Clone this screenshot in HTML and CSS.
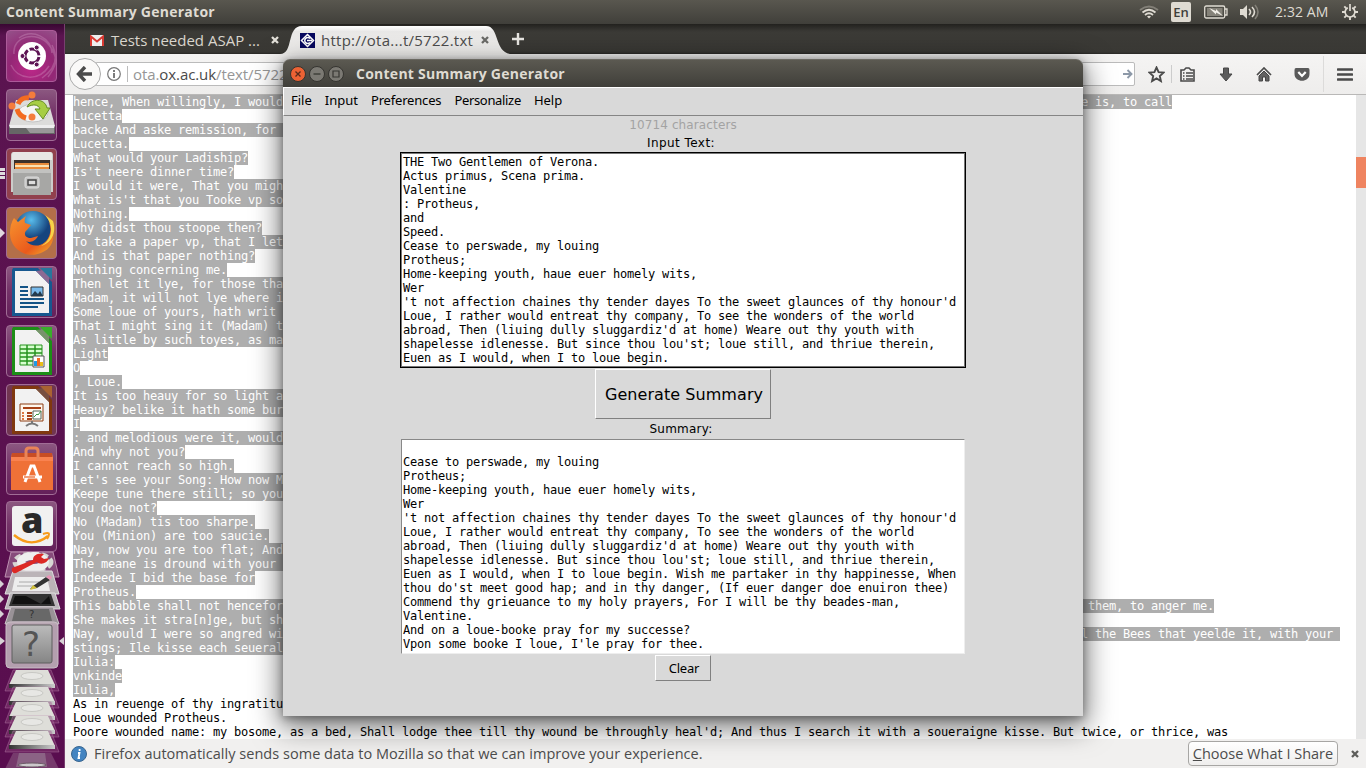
FILE: index.html
```html
<!DOCTYPE html>
<html lang="en">
<head>
<meta charset="utf-8">
<title>Content Summary Generator</title>
<link rel="stylesheet" href="styles.css">
</head>
<body>
<div class="desktop">
  <header class="panel">
    <span class="panel-title">Content Summary Generator</span>
    <div class="indicators">
      <svg class="wifi" width="20" height="14" viewBox="0 0 20 14" fill="none" stroke="#dfdbd2" stroke-width="1.8"><path d="M1 5Q10-2 19 5" stroke="#827f77"/><path d="M3.500 7.500Q10 2 16.500 7.500M6 10Q10 6.500 14 10"/><path d="M8 11.500Q10 10 12 11.500L10 13.500Z" fill="#dfdbd2" stroke="none"/></svg>
      <span class="lang">En</span>
      <svg class="battery" width="24" height="14" viewBox="0 0 24 14"><rect x=".7" y="1" width="20" height="12" rx="1.500" fill="none" stroke="#dfdbd2" stroke-width="1.300"/><path d="M21 4h2v6h-2" fill="none" stroke="#dfdbd2" stroke-width="1.300"/><path d="M3 3h15.500v8H3z" fill="#858279"/><path d="M5 3l7 3 0-2 7 7-7-3.500v2z" fill="#f1eee7"/></svg>
      <svg class="sound" width="20" height="16" viewBox="0 0 20 16"><path d="M0 5h3l4-4v14l-4-4H0z" fill="#dfdbd2"/><g fill="none" stroke="#dfdbd2" stroke-width="1.600"><path d="M9 5q3 3 0 6M12 3q5 5 0 10"/><path d="M15 1q6 7 0 14" stroke="#827f77"/></g></svg>
      <span class="clock">2:32 AM</span>
      <svg class="gear" width="16" height="16" viewBox="0 0 16 16" fill="none" stroke="#dfdbd2"><path d="M5.800 3.700a4.900 4.900 0 1 0 4.400 0M8 0v7" stroke-width="1.700"/><path d="M0 8h3M13 8h3M8 13v3M2.300 2.300l2 2M13.700 2.300l-2 2M2.300 13.700l2-2M13.700 13.700l-2-2" stroke-width="1.900"/></svg>
    </div>
  </header>

  <div class="workspace">
    <nav class="launcher">
      <div class="tile dash"><svg viewBox="0 0 52 52"><g fill="none" stroke="#e2b6d8" stroke-width="1.500" opacity=".28"><path d="M8 24C6 6 31 0 43 15s5 24-1 32M5 35C12 50 33 52 43 36M46 15c8 15 0 26-10 33M13 8C27-2 45 8 46 23"/></g><circle cx="26" cy="26" r="14" fill="#fff"/><circle cx="26" cy="26" r="7" fill="none" stroke="#5d1454" stroke-width="3" stroke-dasharray="12.660 2" stroke-dashoffset="-1"/><g fill="#5d1454" stroke="#fff"><circle cx="16.500" cy="26" r="2.500"/><circle cx="30.700" cy="17.500" r="2.500"/><circle cx="30.700" cy="34.500" r="2.500"/></g></svg></div>
      <div class="tile disk"><svg viewBox="0 0 52 52"><path d="M10 11h32l7 26H3z" fill="#dcdcda"/><path d="M3 36h46v9H3z" fill="#666"/><path d="M20 39h28v5H24z" fill="#999"/><path d="M3 36h46l-1 3H4z" fill="#eee"/><ellipse cx="27" cy="24" rx="15" ry="9" fill="#f4f4f3" stroke="#c5c5c5"/><path d="M23 9a10 10 0 0 0-11 6M11 20q2 7 9 9" fill="none" stroke="#f36b20" stroke-width="5"/><g fill="#f47c3c"><circle cx="26" cy="6" r="3.500"/><circle cx="6" cy="17" r="3.500"/><circle cx="26" cy="28" r="3.500"/></g><path d="M21 18c4-9 18-9 20 1h3l-7 11-8-10h5c-2-5-7-5-13-2z" fill="#a7ce45" stroke="#648b23"/></svg></div>
      <div class="tile files"><i class="pips"></i><svg viewBox="0 0 52 52"><path d="M8 4h36q3 0 3 3v37H5V7q0-3 3-3z" fill="#ccccca"/><path d="M8 4h36q2 0 2 2v6H6V6q0-2 2-2z" fill="#e8e7e4"/><path d="M8 12h36v12H8z" fill="#3b302a"/><path d="M9 15h34v8H9z" fill="#e98b3a"/><path d="M9 18h34" stroke="#fae1b2" stroke-width="2"/><path d="M7 21h38v26H7z" fill="#a7a7a5"/><path d="M7 21h38v4H7z" fill="#c2c2c0"/><rect x="19" y="29" width="14" height="11" rx="2" fill="#c5c5c4" stroke="#ddd"/><rect x="22" y="32" width="8" height="5" fill="#ddd" stroke="#444" stroke-width="1.500"/></svg></div>
      <div class="tile firefox"><i class="arrow"></i><svg viewBox="0 0 52 52"><defs><radialGradient id="globe" cx="45%" cy="25%"><stop stop-color="#59bdec"/><stop offset="1" stop-color="#16447e"/></radialGradient><linearGradient id="fox" x2="1" y2="1"><stop stop-color="#f7952f"/><stop offset=".65" stop-color="#ea5a1c"/><stop offset="1" stop-color="#f3b22d"/></linearGradient></defs><circle cx="27" cy="22" r="18" fill="url(#globe)"/><path d="M8 11l4 4 8-6q-2 4-1 7l6 2-4 5c-4 3-2 8 4 8l7-2c-3 6-9 7-12 5 8 9 22 4 24-8 1-5 0-9-2-12 10 12 5 27-5 31C22 53 4 43 4 26q0-9 4-15z" fill="url(#fox)"/><path d="M39 8c10 12 7 25-4 31 13-4 15-16 12-25" fill="#f8d348"/></svg></div>
      <div class="tile"><svg viewBox="0 0 52 52"><path d="M7 2h25l14 14v34H6V4z" fill="#17588f"/><path d="M9 5h21l13 13v29H9z" fill="#f2f2f2"/><path d="M30 5l13 13V8q0-4-5-4z" fill="#8c6a93"/><path d="M34 2h12v12z" fill="#28779c"/><path d="M14 21h8M14 25h8M14 29h8M14 33h24M14 37h24M14 41h18" stroke="#145486" stroke-width="2"/><path d="M25 21h12v9H25z" fill="#78baeb" stroke="#333"/><path d="M25 30l4-5 3 3 2-3 3 5z" fill="#243b4d"/></svg></div>
      <div class="tile"><svg viewBox="0 0 52 52"><path d="M7 2h25l14 14v34H6V4z" fill="#1d8e17"/><path d="M9 5h21l13 13v29H9z" fill="#f2f2f2"/><path d="M30 5l13 13V8q0-4-5-4z" fill="#78926c"/><path d="M34 2h12v12z" fill="#39ad2a"/><path d="M14 20h22v20H14z" fill="#d8ffd0" stroke="#26941e"/><path d="M14 24h22M14 28h22M14 32h22M14 36h22M21 20v20M29 20v20" stroke="#26941e" stroke-width="1.500"/><path d="M27 31h11v11H27z" fill="white" stroke="#555"/><path d="M28 36h3v5h-3z" fill="#209be8"/><path d="M31 33h3v8h-3z" fill="#f46b23"/><path d="M34 37h3v4h-3z" fill="#e8bd18"/></svg></div>
      <div class="tile impress"><svg viewBox="0 0 52 52"><path d="M7 2h25l14 14v34H6V4z" fill="#80380f"/><path d="M9 5h21l13 13v29H9z" fill="#f2f2f2"/><path d="M30 5l13 13V8q0-4-5-4z" fill="#785040"/><path d="M34 2h12v12z" fill="#aa6332"/><path d="M14 20h23v17H14z" fill="#fff7ed" stroke="#8c3d12"/><path d="M17 24h18M21 29h5M21 32h5M21 35h5" stroke="#a84217" stroke-width="2"/><path d="M17 28v8" stroke="#de773f" stroke-width="2" stroke-dasharray="2 1"/><path d="M27 27h8v8h-8z" fill="white" stroke="#536458"/><path d="M28 33l3-3 1 1 3-4" fill="none" stroke="#3a9645"/><path d="M26 37v3m-6 2q6-5 12 0" stroke="#777" stroke-width="2" fill="none"/></svg></div>
      <div class="tile"><svg viewBox="0 0 52 52"><path d="M6 10h40l1 5v32H5V15z" fill="#ef7137"/><path d="M6 10h40v6H5z" fill="#c84d24"/><path d="M5 14h42v4H5z" fill="#f98250"/><path d="M20 17V8q0-3 3-3h6q3 0 3 3v9" fill="none" stroke="#e98458" stroke-width="3"/><path d="M19 39l6-16h3l6 16M17 34h19" fill="none" stroke="white" stroke-width="3"/><path d="M18 34h11" stroke="#ea6a2f" stroke-width="1.300"/></svg></div>
      <div class="tile amazon"><svg viewBox="0 0 52 52"><rect x="6" y="5" width="41" height="40" rx="3" fill="#f1f1f1"/><text x="15" y="32" class="amazon-a">a</text><path d="M8 34c12 10 24 9 34 1" fill="none" stroke="#f79b19" stroke-width="2.500"/><path d="M37 33q6-2 6 0t-2 5" fill="none" stroke="#f79b19" stroke-width="2"/></svg></div>
      <svg class="folded" width="65" height="218" viewBox="0 0 65 218">
        <defs><linearGradient id="plate" x2="0" y2="1"><stop stop-color="#bbb"/><stop offset="1" stop-color="#858585"/></linearGradient><linearGradient id="edge"><stop stop-color="#333"/><stop offset="1" stop-color="#ccc"/></linearGradient>
        <g id="drive"><path d="M13 0h38l8 21H5z" fill="#9b5788" fill-opacity=".36" stroke="#b17aa6" stroke-opacity=".45"/><path d="M16 0h32l7 15H9z" fill="#deded9"/><ellipse cx="32" cy="6" rx="11" ry="3.500" fill="#e7e7e4" stroke="#c8c8c4"/><path d="M9 14h46v4H9z" fill="url(#edge)"/></g></defs>
        <path d="M11 1h42l6 25H5z" fill="#ad7ea1" fill-opacity=".55" stroke="#bd91b1"/>
        <ellipse cx="33" cy="11" rx="18" ry="8" fill="none" stroke="#d7d7d3" stroke-width="5" stroke-dasharray="6 3"/><ellipse cx="33" cy="11" rx="12" ry="6" fill="none" stroke="#eee" stroke-width="8"/>
        <path d="M13 20h39l7 23H5z" fill="#bbb4b8" stroke="#e0dce0"/><path d="M15 26h32l3 14H12z" fill="#ededed"/><path d="M19 31h20M17 35h22" stroke="#aaa"/><path d="M33 35l13-9 4 3-13 8-7 1z" fill="#333"/><path d="M46 26l3-2 3 2-2 3z" fill="#e994b7"/><path d="M33 34l4 3-7 2z" fill="#d4c33b"/>
        <path d="M12 17l21-8c0-6 6-7 11-6l-3 3 3 2 5-1c-2 6-9 7-12 4L16 22q-5 1-4-5z" fill="#dc2925"/>
        <path d="M10 42h45l5 16H5z" fill="#bbb6ba" stroke="#ddd"/><path d="M13 43h38l4 12H9z" fill="#333"/><path d="M15 45h34l2 8H12z" fill="#111"/><path d="M26 45h23l-8 8z" fill="#333"/>
        <path d="M11 56h42l6 17H5z" fill="#999297" stroke="#ccc5ca"/><path d="M15 58h34l3 12H12z" fill="#686868"/><text x="29" y="67" class="small-query">?</text>
        <path d="M10 71h44q4 0 4 4v38q0 4-4 4H10q-4 0-4-4V75q0-4 4-4z" fill="#b9a8b4" fill-opacity=".95" stroke="#c9bdc6"/><rect x="12" y="74" width="40" height="38" rx="2" fill="url(#plate)" stroke="#5f5f5f"/><text x="22" y="105" class="query">?</text>
        <path d="M0 29l4 4-4 4zM0 44l4 4-4 4zM0 59l4 4-4 4zM0 86l5 4-5 4zM64 86l-5 4 5 4z" fill="#d7d1d5"/>
        <use href="#drive" y="119"/><use href="#drive" y="136"/><use href="#drive" y="151"/><use href="#drive" y="165"/><use href="#drive" y="180"/>
        <path d="M13 202h38l8 16H5z" fill="#8b5880" fill-opacity=".6"/><path d="M19 202h26l2 14H16z" fill="#a797a3" fill-opacity=".45"/><ellipse cx="32" cy="214" rx="14" ry="2" fill="#ccc8cb" stroke="#6b5966"/>
      </svg>
    </nav>

    <main class="browser">
      <div class="tabs">
        <div class="tab"><svg class="favicon" width="14" height="11" viewBox="0 0 14 11"><path d="M0 0h14v11H0z" fill="#eee"/><path d="M1 11V1.500L7 6.500l6-5V11" fill="none" stroke="#d83a32" stroke-width="2"/></svg><span class="gmail">Tests needed ASAP ...</span><svg class="tab-x" width="8" height="8" viewBox="0 0 8 8"><path d="M1 1l6 6M7 1L1 7" stroke="#e4e1da" stroke-width="2.300"/></svg></div>
        <div class="tab active"><svg class="tab-shape" width="232" height="30" viewBox="0 0 232 30"><defs><linearGradient id="tabfill" x2="0" y2="1"><stop stop-color="#fff"/><stop offset=".2" stop-color="#e9e8e7"/><stop offset="1" stop-color="#f2f1ef"/></linearGradient></defs><path d="M0 30C14 30 6 2 22 2H206C220 2 214 30 232 30z" fill="url(#tabfill)"/></svg><svg class="ota" width="15" height="15" viewBox="0 0 15 15"><path d="M0 0h15v15H0z" fill="#07085f"/><path d="M7.500 1.500l6 6-6 6-6-6z" fill="none" stroke="white" stroke-width="1.500"/><path d="M10 5.500a3 3 0 1 0 0 4M7 7.500h5" fill="none" stroke="white" stroke-width="1.500"/></svg><span class="address-tab">http://ota...t/5722.txt</span><svg class="tab-x" width="8" height="8" viewBox="0 0 8 8"><path d="M1 1l6 6M7 1L1 7" stroke="#6a6a67" stroke-width="2.300"/></svg></div>
        <svg class="plus" width="14" height="14" viewBox="0 0 14 14"><path d="M7 1v12M1 7h12" stroke="#e8e6e2" stroke-width="2.400"/></svg>
      </div>
      <div class="toolbar">
        <div class="back"><svg width="18" height="16" viewBox="0 0 18 16"><path d="M9 1L2.500 8 9 15M3 8h13" fill="none" stroke="#4b4b4b" stroke-width="3.400"/></svg></div>
        <div class="urlbar"><svg class="info" width="14" height="14" viewBox="0 0 14 14"><circle cx="7" cy="7" r="6.300" fill="none" stroke="#777" stroke-width="1.200"/><path d="M7 3v2M7 6v5" stroke="#666" stroke-width="1.700"/></svg><span class="url">ota.<b>ox.ac.uk</b>/text/5722.txt</span><svg class="go" width="10" height="10" viewBox="0 0 10 10"><path d="M0 5h8M4.500 1l4 4-4 4" fill="none" stroke="#8d99a8" stroke-width="1.900"/></svg></div>
        <svg class="star" width="17" height="17" viewBox="0 0 17 17"><path d="M8.500 1.500l2.100 4.600 5 .5-3.800 3.400 1.100 5-4.400-2.600L4.100 15l1.100-5-3.800-3.400 5-.5z" fill="none" stroke="#4a4a4a" stroke-width="1.900"/></svg>
        <i class="divider small"></i>
        <svg class="library" width="15" height="15" viewBox="0 0 15 15"><path d="M1 3h3l2-2h3l2 2h3v11H1z" fill="none" stroke="#4a4a4a" stroke-width="1.600"/><path d="M3 6h1.500M3 9h1.500M3 12h1.500M6 6h7M6 9h7M6 12h7" stroke="#4a4a4a" stroke-width="1.500"/></svg>
        <svg class="download" width="14" height="15" viewBox="0 0 14 15"><path d="M4.500 1h5v6H13L7 14 1 7h3.500z" fill="#5c5c5c" stroke="#474747"/></svg>
        <svg class="home" width="16" height="15" viewBox="0 0 16 15"><path d="M1 8l7-7 7 7" fill="none" stroke="#4a4a4a" stroke-width="1.700"/><path d="M3 9l5-5 5 5v5h-3.500v-4h-3v4H3z" fill="#626262" stroke="#454545"/></svg>
        <svg class="pocket" width="16" height="15" viewBox="0 0 16 15"><path d="M2 1h12q1.500 0 1.500 2v4c0 9-15 9-15 0V3Q.500 1 2 1z" fill="#5a5a5a"/><path d="M4.300 5l3.700 4 3.700-4" fill="none" stroke="white" stroke-width="2.200"/></svg>
        <i class="divider"></i>
        <svg class="hamburger" width="16" height="13" viewBox="0 0 16 13"><path d="M1 1.500h14M1 6.500h14M1 11.500h14" stroke="#4a4a4a" stroke-width="2.600" stroke-linecap="round"/></svg>
      </div>
      <div class="viewport">
<pre class="document"><span>hence, When willingly, I would haue had her here? How angerly I taught my brow to frowne, When inward ioy enforc'd my heart to smile? My pennance is, to call</span>
<span>Lucetta</span>
<span>backe And aske remission, for my folly past. What hoe:</span>
<span>Lucetta.</span>
<span>What would your Ladiship?</span>
<span>Is't neere dinner time?</span>
<span>I would it were, That you might kill your stomacke on your meat.</span>
<span>What is't that you Tooke vp so gingerly?</span>
<span>Nothing.</span>
<span>Why didst thou stoope then?</span>
<span>To take a paper vp, that I let fall.</span>
<span>And is that paper nothing?</span>
<span>Nothing concerning me.</span>
<span>Then let it lye, for those that it concernes.</span>
<span>Madam, it will not lye where it concernes.</span>
<span>Some loue of yours, hath writ to you in Rime.</span>
<span>That I might sing it (Madam) to a tune.</span>
<span>As little by such toyes, as may be possible.</span>
<span>Light</span>
<span>O</span>
<span>, Loue.</span>
<span>It is too heauy for so light a tune.</span>
<span>Heauy? belike it hath some burden then?</span>
<span>I</span>
<span>: and melodious were it, would you sing it.</span>
<span>And why not you?</span>
<span>I cannot reach so high.</span>
<span>Let's see your Song: How now Minion?</span>
<span>Keepe tune there still; so you will sing it out.</span>
<span>You doe not?</span>
<span>No (Madam) tis too sharpe.</span>
<span>You (Minion) are too saucie.</span>
<span>Nay, now you are too flat; And marre the concord.</span>
<span>The meane is dround with your vnruly base.</span>
<span>Indeede I bid the base for</span>
<span>Protheus.</span>
<span>This babble shall not henceforth trouble me; Here is a coile with protestation: Goe, get you gone: and let the papers lye: You would be fingring them, to anger me.</span>
<span>She makes it stra[n]ge, but she would be best pleas'd To be so angred with another Letter.</span>
<span>Nay, would I were so angred with the same: Oh hatefull hands, to teare such louing words; Iniurious Waspes, to feede on such sweet hony, And kill the Bees that yeelde it, with your </span>
<span>stings; Ile kisse each seuerall paper, for amends: Looke, here is writ, kinde</span>
<span>Iulia:</span>
<span>vnkinde</span>
<span>Iulia,</span>
As in reuenge of thy ingratitude, I throw thy name against the bruzing-stones.
Loue wounded Protheus.
Poore wounded name: my bosome, as a bed, Shall lodge thee till thy wound be throughly heal'd; And thus I search it with a soueraigne kisse. But twice, or thrice, was</pre>
        <div class="scrollbar"><div class="thumb"></div></div>
      </div>
      <div class="notice"><svg width="16" height="16" viewBox="0 0 16 16"><circle cx="8" cy="8" r="7.500" fill="#4384c1" stroke="#39658e"/><path d="M8.600 3v2M7 7h1.500l-1 5H9" fill="none" stroke="white" stroke-width="1.800"/></svg><span class="message">Firefox automatically sends some data to Mozilla so that we can improve your experience.</span><button class="choice"><u>C</u>hoose What I Share</button><svg class="notice-x" width="8" height="8" viewBox="0 0 8 8"><path d="M1 1l6 6M7 1L1 7" stroke="#5d5d5a" stroke-width="2.300"/></svg></div>
    </main>
  </div>

  <section class="window">
    <div class="titlebar"><svg width="56" height="18" viewBox="0 0 56 18"><circle cx="9" cy="9" r="7.500" fill="#ec6234" stroke="#353430"/><path d="M6.500 6.500l5 5M11.500 6.500l-5 5" stroke="#552b1c" stroke-width="1.300"/><circle cx="28" cy="9" r="7.500" fill="#7b7973" stroke="#353430"/><path d="M24.500 9h7" stroke="#373632" stroke-width="1.300"/><circle cx="47" cy="9" r="7.500" fill="#7b7973" stroke="#353430"/><path d="M44 6h6v6h-6z" fill="none" stroke="#373632" stroke-width="1.200"/></svg><span class="window-title">Content Summary Generator</span></div>
    <div class="menubar"><span>File</span><span>Input</span><span class="pref">Preferences</span><span class="pers">Personalize</span><span>Help</span></div>
    <div class="app">
      <div class="count">10714 characters</div>
      <div class="label">Input Text:</div>
<pre class="input-text">THE Two Gentlemen of Verona.
Actus primus, Scena prima.
Valentine
: Protheus,
and
Speed.
Cease to perswade, my louing
Protheus;
Home-keeping youth, haue euer homely wits,
Wer
't not affection chaines thy tender dayes To the sweet glaunces of thy honour'd
Loue, I rather would entreat thy company, To see the wonders of the world
abroad, Then (liuing dully sluggardiz'd at home) Weare out thy youth with
shapelesse idlenesse. But since thou lou'st; loue still, and thriue therein,
Euen as I would, when I to loue begin.</pre>
      <button class="generate">Generate Summary</button>
      <div class="label summary-label">Summary:</div>
<pre class="summary-text">&nbsp;
Cease to perswade, my louing
Protheus;
Home-keeping youth, haue euer homely wits,
Wer
't not affection chaines thy tender dayes To the sweet glaunces of thy honour'd
Loue, I rather would entreat thy company, To see the wonders of the world
abroad, Then (liuing dully sluggardiz'd at home) Weare out thy youth with
shapelesse idlenesse. But since thou lou'st; loue still, and thriue therein,
Euen as I would, when I to loue begin. Wish me partaker in thy happinesse, When
thou do'st meet good hap; and in thy danger, (If euer danger doe enuiron thee)
Commend thy grieuance to my holy prayers, For I will be thy beades-man,
Valentine.
And on a loue-booke pray for my successe?
Vpon some booke I loue, I'le pray for thee.</pre>
      <button class="clear">Clear</button>
    </div>
  </section>
</div>
</body>
</html>
```
FILE: styles.css
```css
*{box-sizing:border-box}
body{margin:0;overflow:hidden;font-family:"Open Sans","Noto Sans",sans-serif;color:#4c4c4c}
svg{display:block;flex:none}
pre{margin:0;font:12px/14px "DejaVu Sans Mono",monospace;letter-spacing:-.224px}
button{font:inherit;padding:0}
.desktop{position:relative;width:1366px;height:768px;overflow:hidden}
.panel{height:24px;display:flex;align-items:center;justify-content:space-between;padding:0 8px 0 6px;background:linear-gradient(#59574f,#403f3a);color:#dfdbd2;white-space:nowrap}
.panel-title,.window-title{font-weight:700;font-size:14px;line-height:24px;letter-spacing:.25px}
.indicators{display:flex;align-items:center;font-size:15px}
.lang{width:20px;height:20px;margin:0 13px 0 12px;border-radius:2px;background:#dfdbd2;color:#403f3a;font-size:13px;font-weight:600;line-height:20px;text-align:center}
.sound{margin-left:12px}.clock{width:55px;margin:-1px 12px 0 15px;font-size:14px;letter-spacing:.1px}
.workspace{height:744px;display:flex}
.launcher{width:65px;display:flex;flex-direction:column;padding:6px 7px 0 6px;gap:7px;background:linear-gradient(#390732,#5b1450 12px,#5a114f 60%,#590d4f);border-right:1px solid #783f6f;flex:none;position:relative}
.tile{height:52px;flex:none;border:1px solid #a16d96;border-radius:4px;background:linear-gradient(#8b5780,#753469 45%,#64205a);position:relative}
.tile svg{margin:-1px;width:52px;height:52px}
.tile.dash{background:radial-gradient(circle at 50% 75%,#bd2889,#932775 50%,#95528a);border-color:#ac5a99}
.files{background:#91404d}.firefox{background:#b36f49}.impress{background:#713651}
.amazon{height:51px;margin-top:-1px}
.amazon-a{font:800 36px "Open Sans",sans-serif;fill:#292929}
.query{font:34px "DejaVu Sans",sans-serif;fill:#555}.small-query{font:10px "DejaVu Sans",sans-serif;fill:#333}
.folded{margin:-8px 0 0 -6px}
.arrow{position:absolute;left:-7px;top:20px;border:5px solid transparent;border-left-color:#e1d8df;border-right:0}
.pips{position:absolute;left:-7px;top:19px;width:5px;height:11px;background:repeating-linear-gradient(#ddd 0 3px,transparent 3px 4px)}
.browser{width:1301px;display:flex;flex-direction:column}
.tabs{height:30px;background:linear-gradient(#22211e,#3c3b37 8px,#393834 28px,#292825);display:flex;align-items:center;color:#d9d5cd}
.tab{display:flex;align-items:center;width:215px;height:30px;padding:2px 0 0 25px;font-size:15px;white-space:nowrap}
.gmail{margin-left:7px;width:157px}.gmail,.address-tab{padding-bottom:1px}.tab-x{margin-left:3px}
.tab.active{position:relative;width:226px;padding-left:20px;color:#4c4c4c}
.tab-shape{position:absolute;left:0;top:0}.ota,.address-tab,.active .tab-x{position:relative}.address-tab{width:153px;margin-left:6px;letter-spacing:.26px}.active .tab-x{margin-left:7px}
.plus{margin-left:5px}
.toolbar{height:41px;display:flex;align-items:center;padding-left:4px;background:linear-gradient(#f5f4f3,#eeedec);border-bottom:1px solid #b9b8b7}
.back{width:32px;height:32px;border:1px solid #aaa;border-radius:50%;background:#faf9f8;display:grid;place-items:center;z-index:1}
.urlbar{width:1040px;height:24px;display:flex;align-items:center;margin-left:-6px;padding:0 1px 0 11px;border:1px solid #bbb;border-radius:2px;background:#fff;white-space:nowrap}
.url{height:16px;display:flex;align-items:center;margin-left:6px;padding-left:5px;border-left:1px solid #bbb;font-size:15px;letter-spacing:-.08px;color:#969696}.url b{font-weight:400;color:#4a4a4a}
.go{margin-left:auto}.star{margin-left:13px}.divider{width:1px;height:36px;background:#dcdbda}.divider.small{height:18px;margin-left:6px;background:#ccc}.library{margin-left:8px}.download{margin-left:24px}.home{margin-left:23px}.pocket{margin-left:22px}.pocket + .divider{margin-left:13px}.hamburger{margin-left:13px}
.viewport{height:644px;background:#fff;display:flex;justify-content:space-between;overflow:hidden}
.document{padding-left:8px;color:#000}.document span{display:inline-block;height:14px;vertical-align:top;background:#aeaeae;color:#fff}
.scrollbar{width:10px;padding-top:62px;background:#e6e6e6;flex:none}.thumb{height:31px;background:#ef8460}
.notice{height:29px;display:flex;align-items:center;padding:0 7px 0 6px;background:#f1f0ef;font-size:14.5px;white-space:nowrap}
.message{margin-left:7px;letter-spacing:.03px}.choice{width:150px;height:25px;margin-left:auto;border:1px solid #a7a6a4;border-radius:4px;background:linear-gradient(#fff,#efeeed);color:#4c4c4c}.notice-x{margin-left:13px}
.window{position:absolute;left:283px;top:59px;width:800px;height:657px;border-radius:7px 7px 0 0;background:#d9d9d9;box-shadow:0 8px 28px 3px rgba(0,0,0,.55),0 2px 8px rgba(0,0,0,.35);font-family:"DejaVu Sans",sans-serif;color:#000}
.titlebar{height:28px;border-radius:7px 7px 0 0;background:linear-gradient(#5b5951,#403f3a);border-top:1px solid #6b6962;display:flex;align-items:center;padding-left:6px;color:#dfdbd2}
.window-title{font-family:"Open Sans",sans-serif;margin-left:11px}
.menubar{height:29px;border-top:1px solid #fff;border-left:1px solid #fff;border-bottom:1px solid #858585;display:flex;align-items:center;gap:13px;padding:0 0 3px 7px;font:13px "Noto Sans",sans-serif}
.pref{letter-spacing:-.18px}.pers{letter-spacing:-.33px}
.app{display:flex;flex-direction:column;align-items:center}
.count,.label{height:18px;font-size:12px;line-height:18px}.count{color:#a3a3a3;letter-spacing:.12px}.label{padding-right:4px;letter-spacing:.45px}
.input-text{width:566px;height:216px;background:#fff;border:1px solid #000;box-shadow:inset 0 0 0 1px #777;padding:2px;overflow:hidden}
.generate{width:176px;height:50px;margin-top:1px;border:1px solid;border-color:#fff #808080 #808080 #fff;background:#d9d9d9;font-size:16px;letter-spacing:.06px;padding-left:2px}
.summary-label{height:20px;line-height:20px;letter-spacing:.25px}
.summary-text{width:564px;height:215px;background:#fff;border:1px solid;border-color:#888 #eee #eee #888;padding:1px;overflow:hidden}
.clear{width:56px;height:26px;margin-top:1px;border:1px solid;border-color:#fff #808080 #808080 #fff;background:#d9d9d9;font:13px "Noto Sans",sans-serif;letter-spacing:-.2px;padding-left:2px}
```
